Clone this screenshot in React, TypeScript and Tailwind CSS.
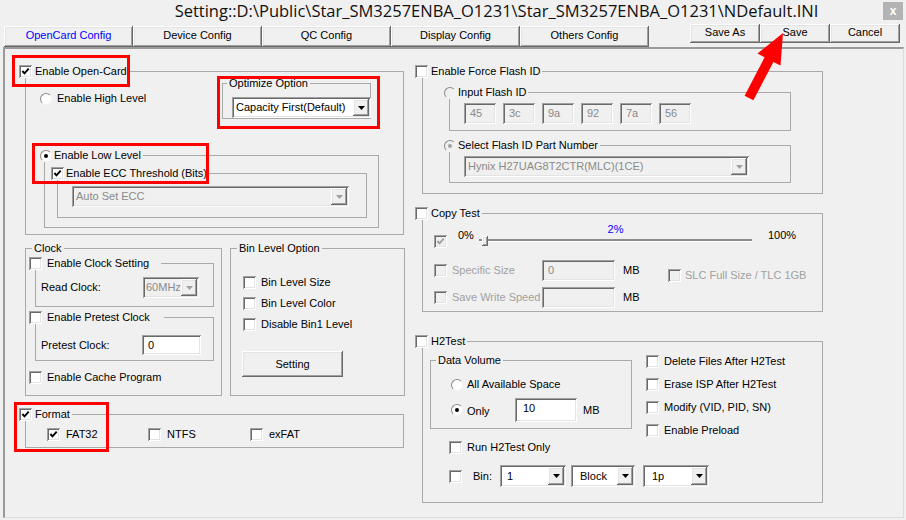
import React from "react";

const sunken =
  "shadow-[inset_1px_1px_0_#a0a0a0,inset_-1px_-1px_0_#ffffff,inset_2px_2px_0_#696969,inset_-2px_-2px_0_#e3e3e3]";
const raised =
  "shadow-[inset_-1px_-1px_0_#696969,inset_1px_1px_0_#ffffff,inset_-2px_-2px_0_#a0a0a0,inset_2px_2px_0_#e3e3e3]";

type Kids = { children?: React.ReactNode };

function Box({ checked = false, disabled = false }: { checked?: boolean; disabled?: boolean }) {
  return (
    <span className={`relative block w-[13px] h-[13px] shrink-0 ${disabled ? "bg-[#f0f0f0]" : "bg-white"} ${sunken}`}>
      {checked && (
        <svg viewBox="0 0 13 13" className="absolute inset-0 w-[13px] h-[13px]">
          <path d="M3.4 6 L5.5 8.3 L9.7 3.7" fill="none" stroke={disabled ? "#a0a0a0" : "#000"} strokeWidth="1.9" />
        </svg>
      )}
    </span>
  );
}

function Dot({ checked = false, disabled = false }: { checked?: boolean; disabled?: boolean }) {
  return (
    <span
      className={`relative block w-[12px] h-[12px] shrink-0 rounded-full border border-t-[#8a8a8a] border-l-[#8a8a8a] border-r-[#f4f4f4] border-b-[#f4f4f4] ${
        disabled ? "bg-[#f0f0f0]" : "bg-white"
      }`}
    >
      {checked && (
        <span className={`absolute left-[3px] top-[3px] w-[4px] h-[4px] rounded-full ${disabled ? "bg-[#a0a0a0]" : "bg-black"}`} />
      )}
    </span>
  );
}

function Check({
  label,
  checked,
  disabled,
  className = "",
  gap = "ml-[5px]",
}: {
  label: string;
  checked?: boolean;
  disabled?: boolean;
  className?: string;
  gap?: string;
}) {
  return (
    <div className={`flex items-center h-[13px] ${className}`}>
      <Box checked={checked} disabled={disabled} />
      <span className={`${gap} whitespace-nowrap ${disabled ? "text-[#a0a0a0]" : ""}`}>{label}</span>
    </div>
  );
}

function Group({
  label,
  className = "",
  labelClass = "",
  children,
}: Kids & { label?: React.ReactNode; className?: string; labelClass?: string }) {
  return (
    <div className={`relative shrink-0 border border-[#a9a9a9] ${className}`}>
      {label && (
        <div className={`absolute top-[-7px] flex items-center h-[13px] bg-[#f0f0f0] whitespace-nowrap ${labelClass}`}>{label}</div>
      )}
      {children}
    </div>
  );
}

function Combo({
  value,
  disabled,
  className = "",
  h = "h-[21px]",
  textClass = "pl-[4px]",
}: {
  value: string;
  disabled?: boolean;
  className?: string;
  h?: string;
  textClass?: string;
}) {
  return (
    <div className={`flex ${h} ${sunken} ${disabled ? "bg-[#f0f0f0] text-[#8a8a8a]" : "bg-white"} ${className}`}>
      <span className={`flex-1 self-center whitespace-nowrap overflow-hidden ${textClass}`}>{value}</span>
      <span className={`my-[2px] mr-[2px] w-[16px] flex items-center justify-center bg-[#f0f0f0] ${raised}`}>
        <svg width="7" height="4" viewBox="0 0 7 4">
          <path d="M0 0H7L3.5 4Z" fill={disabled ? "#a0a0a0" : "#000"} />
        </svg>
      </span>
    </div>
  );
}

function Field({
  value = "",
  disabled,
  className = "",
  h = "h-[21px]",
  textClass = "pl-[6px]",
}: {
  value?: string;
  disabled?: boolean;
  className?: string;
  h?: string;
  textClass?: string;
}) {
  return (
    <div
      className={`flex items-center shrink-0 ${h} ${sunken} ${disabled ? "bg-[#f0f0f0] text-[#8a8a8a]" : "bg-white"} ${textClass} ${className}`}
    >
      {value}
    </div>
  );
}

function Btn({ children, className = "" }: Kids & { className?: string }) {
  return <div className={`flex items-center justify-center bg-[#f0f0f0] ${raised} ${className}`}>{children}</div>;
}

const tabs = ["OpenCard Config", "Device Config", "QC Config", "Display Config", "Others Config"];
const flashIds = ["45", "3c", "9a", "92", "7a", "56"];

export default function App() {
  return (
    <div className="relative w-[906px] h-[520px] overflow-hidden bg-[#f0f0f0] text-black text-[11px] leading-[13px] font-['Liberation_Sans',Arial,sans-serif]">
      {/* title bar */}
      <div className="flex h-[22px] items-start">
        <div className="flex-1 pl-[110px] text-center whitespace-nowrap text-[16.5px] leading-[22px] text-[#111] font-['Open_Sans','Noto_Sans',sans-serif]">
          {"Setting::D:\\Public\\Star_SM3257ENBA_O1231\\Star_SM3257ENBA_O1231\\NDefault.INI"}
        </div>
        <div className="mt-[2px] mr-[3px] w-[20px] h-[18px] bg-[#b3b3b3] text-white text-[12px] font-bold leading-none flex items-center justify-center">
          x
        </div>
      </div>

      {/* tabs + buttons */}
      <div className="flex h-[25px] items-start">
        <div className="flex ml-[4px] mt-[4px]">
          {tabs.map((t, i) => (
            <Btn key={t} className={`w-[129px] h-[21px] pb-[3px] ${i === 0 ? "text-[#0000ff]" : ""}`}>
              {t}
            </Btn>
          ))}
        </div>
        <div className="flex ml-auto mr-[6px] mt-[2px]">
          <Btn className="w-[70px] h-[19px] pb-[3px]">Save As</Btn>
          <Btn className="w-[70px] h-[19px] pb-[3px]">Save</Btn>
          <Btn className="w-[70px] h-[19px] pb-[3px]">Cancel</Btn>
        </div>
      </div>

      {/* page */}
      <div className="flex ml-[3px] w-[901px] h-[471px] border-t-2 border-l-2 border-t-[#9a9a9a] border-l-[#9a9a9a] border-r border-b border-r-[#dcdcdc] border-b-[#dcdcdc]">
        {/* left column */}
        <div className="w-[405px] shrink-0 flex flex-col items-start">
          <Group
            className="ml-[20px] mt-[22px] w-[379px] h-[164px]"
            labelClass="left-[-7px] pr-[2px]"
            label={
              <>
                <Box checked />
                <span className="ml-[3px]">Enable Open-Card</span>
              </>
            }
          >
            <div className="flex h-[83px] items-start">
              <div className="ml-[14px] mt-[20px] flex items-center h-[13px]">
                <Dot />
                <span className="ml-[5px]">Enable High Level</span>
              </div>
              <Group className="ml-auto mr-[32px] mt-[11px] w-[149px] h-[36px]" labelClass="left-[4px] px-[2px]" label="Optimize Option">
                <Combo className="ml-[9px] mt-[13px] w-[139px]" value="Capacity First(Default)" />
              </Group>
            </div>
            <Group
              className="ml-[18px] w-[335px] h-[73px]"
              labelClass="left-[-5px] pr-[2px]"
              label={
                <>
                  <Dot checked />
                  <span className="ml-[2px]">Enable Low Level</span>
                </>
              }
            >
              <Group
                className="ml-[12px] mt-[17px] w-[310px] h-[45px]"
                labelClass="left-[-7px] pr-[2px]"
                label={
                  <>
                    <Box checked />
                    <span className="ml-[2px]">Enable ECC Threshold (Bits)</span>
                  </>
                }
              >
                <Combo disabled className="ml-[14px] mt-[12px] w-[277px]" value="Auto Set ECC" />
              </Group>
            </Group>
          </Group>

          <div className="flex ml-[20px] mt-[13px] gap-[8px]">
            <Group className="w-[197px] h-[148px]" labelClass="left-[6px] px-[2px]" label="Clock">
              <Group
                className="ml-[9px] mt-[14px] w-[179px] h-[44px]"
                labelClass="left-[-7px] pr-[12px]"
                label={
                  <>
                    <Box />
                    <span className="ml-[5px]">Enable Clock Setting</span>
                  </>
                }
              >
                <div className="flex items-center h-[21px] mt-[13px] ml-[5px]">
                  <span className="w-[102px]">Read Clock:</span>
                  <Combo disabled className="w-[56px]" value="60MHz" textClass="pl-[3px]" />
                </div>
              </Group>
              <Group
                className="ml-[9px] mt-[10px] w-[179px] h-[44px]"
                labelClass="left-[-7px] pr-[14px]"
                label={
                  <>
                    <Box />
                    <span className="ml-[5px]">Enable Pretest Clock</span>
                  </>
                }
              >
                <div className="flex items-center h-[20px] mt-[17px] ml-[5px]">
                  <span className="w-[101px]">Pretest Clock:</span>
                  <Field className="w-[59px]" h="h-[20px]" value="0" />
                </div>
              </Group>
              <Check className="ml-[3px] mt-[10px]" label="Enable Cache Program" />
            </Group>

            <Group className="w-[175px] h-[148px]" labelClass="left-[6px] px-[2px]" label="Bin Level Option">
              <div className="ml-[12px] mt-[27px] flex flex-col gap-[8px]">
                <Check label="Bin Level Size" />
                <Check label="Bin Level Color" />
                <Check label="Disable Bin1 Level" />
              </div>
              <Btn className="ml-[11px] mt-[20px] w-[101px] h-[26px]">Setting</Btn>
            </Group>
          </div>

          <Group
            className="ml-[20px] mt-[18px] w-[379px] h-[34px]"
            labelClass="left-[-7px] pr-[2px]"
            label={
              <>
                <Box checked />
                <span className="ml-[3px]">Format</span>
              </>
            }
          >
            <div className="flex mt-[13px] ml-[21px]">
              <Check className="w-[101px]" gap="ml-[6px]" checked label="FAT32" />
              <Check className="w-[102px]" gap="ml-[6px]" label="NTFS" />
              <Check gap="ml-[6px]" label="exFAT" />
            </div>
          </Group>
        </div>

        {/* right column */}
        <div className="flex-1 flex flex-col items-start">
          <Group
            className="ml-[12px] mt-[22px] w-[401px] h-[123px]"
            labelClass="left-[-8px] pr-[2px]"
            label={
              <>
                <Box />
                <span className="ml-[3px]">Enable Force Flash ID</span>
              </>
            }
          >
            <Group
              className="ml-[26px] mt-[20px] w-[342px] h-[39px]"
              labelClass="left-[-6px] pr-[2px]"
              label={
                <>
                  <Dot disabled />
                  <span className="ml-[2px]">Input Flash ID</span>
                </>
              }
            >
              <div className="flex gap-[7px] ml-[14px] mt-[10px]">
                {flashIds.map((v) => (
                  <Field key={v} disabled className="w-[32px]" value={v} />
                ))}
              </div>
            </Group>
            <Group
              className="ml-[26px] mt-[14px] w-[342px] h-[38px]"
              labelClass="left-[-6px] pr-[2px]"
              label={
                <>
                  <Dot checked disabled />
                  <span className="ml-[2px]">Select Flash ID Part Number</span>
                </>
              }
            >
              <Combo disabled className="ml-[14px] mt-[10px] w-[285px]" value="Hynix H27UAG8T2CTR(MLC)(1CE)" />
            </Group>
          </Group>

          <Group
            className="ml-[12px] mt-[19px] w-[401px] h-[99px]"
            labelClass="left-[-8px] pr-[2px]"
            label={
              <>
                <Box />
                <span className="ml-[3px]">Copy Test</span>
              </>
            }
          >
            <div className="flex items-start h-[34px]">
              <div className="ml-[11px] mt-[21px]">
                <Box checked disabled />
              </div>
              <span className="ml-[11px] mt-[15px] w-[21px]">0%</span>
              <div className="mt-[9px] w-[273px] flex flex-col">
                <span className="text-center text-[#0000ff]">2%</span>
                <div className="relative h-[12px]">
                  <div className="mt-[3px] h-[3px] border-t-2 border-t-[#8c8c8c] border-b border-b-white" />
                  <div className={`absolute left-[3px] top-[0px] w-[6px] h-[10px] bg-[#f0f0f0] ${raised}`} />
                </div>
              </div>
              <span className="ml-[16px] mt-[15px]">100%</span>
            </div>
            <div className="flex items-center h-[21px] mt-[12px]">
              <div className="ml-[11px]">
                <Box disabled />
              </div>
              <span className="ml-[5px] w-[90px] text-[#a0a0a0]">Specific Size</span>
              <Field disabled className="w-[73px]" value="0" />
              <span className="ml-[8px] w-[45px]">MB</span>
              <Check className="mt-[10px]" disabled gap="ml-[4px]" label="SLC Full Size / TLC 1GB" />
            </div>
            <div className="flex items-center h-[21px] mt-[6px]">
              <div className="ml-[11px]">
                <Box disabled />
              </div>
              <span className="ml-[5px] w-[90px] whitespace-nowrap text-[#a0a0a0]">Save Write Speed</span>
              <Field disabled className="w-[73px]" />
              <span className="ml-[8px]">MB</span>
            </div>
          </Group>

          <Group
            className="ml-[12px] mt-[29px] w-[401px] h-[162px]"
            labelClass="left-[-8px] pr-[2px]"
            label={
              <>
                <Box />
                <span className="ml-[3px]">H2Test</span>
              </>
            }
          >
            <div className="flex items-start h-[99px]">
              <Group className="ml-[7px] mt-[18px] w-[202px] h-[69px]" labelClass="left-[5px] px-[2px]" label="Data Volume">
                <div className="flex items-center h-[13px] ml-[20px] mt-[17px]">
                  <Dot />
                  <span className="ml-[4px]">All Available Space</span>
                </div>
                <div className="flex items-center h-[24px] ml-[20px] mt-[7px]">
                  <Dot checked />
                  <span className="ml-[4px] w-[48px] pt-[2px]">Only</span>
                  <Field className="w-[62px] items-start pt-[4px]" h="h-[24px]" textClass="pl-[8px]" value="10" />
                  <span className="ml-[6px]">MB</span>
                </div>
              </Group>
              <div className="ml-[14px] mt-[13px] flex flex-col gap-[10px]">
                <Check label="Delete Files After H2Test" />
                <Check label="Erase ISP After H2Test" />
                <Check label="Modify (VID, PID, SN)" />
                <Check label="Enable Preload" />
              </div>
            </div>
            <Check className="ml-[26px]" label="Run H2Test Only" />
            <div className="flex items-center h-[22px] mt-[11px] ml-[26px]">
              <Box />
              <span className="ml-[11px] w-[27px]">Bin:</span>
              <Combo className="w-[66px]" h="h-[22px]" textClass="pl-[7px]" value="1" />
              <Combo className="ml-[5px] w-[64px]" h="h-[22px]" textClass="pl-[9px]" value="Block" />
              <Combo className="ml-[8px] w-[66px]" h="h-[22px]" textClass="pl-[9px]" value="1p" />
            </div>
          </Group>
        </div>
      </div>

      {/* annotations */}
      <div className="absolute left-[12px] top-[55px] w-[118px] h-[32px] border-[3px] border-[#ff0000]" />
      <div className="absolute left-[217px] top-[76px] w-[163px] h-[53px] border-[3px] border-[#ff0000]" />
      <div className="absolute left-[32px] top-[143px] w-[177px] h-[41px] border-[3px] border-[#ff0000]" />
      <div className="absolute left-[14px] top-[402px] w-[95px] h-[50px] border-[3px] border-[#ff0000]" />
      <svg className="absolute left-[740px] top-[30px]" width="50" height="75" viewBox="0 0 50 75">
        <polygon points="43,3 17.5,23.6 24.6,27.3 4.6,65.7 13.4,70.3 33.4,31.9 40.5,35.6" fill="#ff0000" />
      </svg>
    </div>
  );
}
